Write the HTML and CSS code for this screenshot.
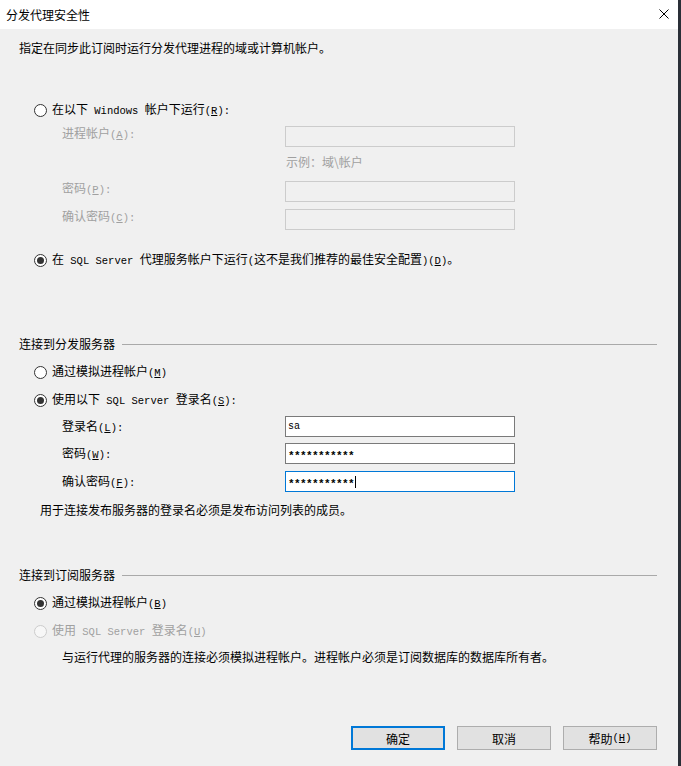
FILE: index.html
```html
<!DOCTYPE html>
<html lang="zh-CN">
  <head>
    <meta charset="UTF-8" />
    <title>分发代理安全性</title>
    <link rel="stylesheet" href="styles.css">
  </head>
  <body>
    <div class="dialog">
      <!-- 标题栏 -->
      <div class="titlebar">
        <span class="title">分发代理安全性</span>
        <svg class="close" viewBox="0 0 10 10">
          <path d="M0.5 0.5 L9.5 9.5 M9.5 0.5 L0.5 9.5" stroke="#000" stroke-width="1" fill="none" />
        </svg>
      </div>

      <div class="body">
        <p class="intro">指定在同步此订阅时运行分发代理进程的域或计算机帐户。</p>

        <!-- Windows 帐户 -->
        <div class="radio gap-win">
          <span class="dot"></span>
          <span>在以下<span class="en"> Windows </span>帐户下运行<span class="en">(<u>R</u>):</span></span>
        </div>
        <div class="field off gap-a">
          <span class="flabel">进程帐户<span class="en">(<u>A</u>):</span></span>
          <span class="box"></span>
        </div>
        <div class="hint">示例：域\帐户</div>
        <div class="field off gap-b">
          <span class="flabel">密码<span class="en">(<u>P</u>):</span></span>
          <span class="box"></span>
        </div>
        <div class="field off gap-c">
          <span class="flabel">确认密码<span class="en">(<u>C</u>):</span></span>
          <span class="box"></span>
        </div>
        <div class="radio gap-d">
          <span class="dot on"></span>
          <span>在<span class="en"> SQL Server </span>代理服务帐户下运行<span class="en">(</span>这不是我们推荐的最佳安全配置<span class="en">)(<u>D</u>)</span>。</span>
        </div>

        <!-- 连接到分发服务器 -->
        <div class="group gap-g1"><span>连接到分发服务器</span><i class="rule"></i></div>
        <div class="radio gap-r">
          <span class="dot"></span>
          <span>通过模拟进程帐户<span class="en">(<u>M</u>)</span></span>
        </div>
        <div class="radio gap-r">
          <span class="dot on"></span>
          <span>使用以下<span class="en"> SQL Server </span>登录名<span class="en">(<u>S</u>):</span></span>
        </div>
        <div class="field on gap-l">
          <span class="flabel">登录名<span class="en">(<u>L</u>):</span></span>
          <span class="box"><span class="val">sa</span></span>
        </div>
        <div class="field on gap-b2">
          <span class="flabel">密码<span class="en">(<u>W</u>):</span></span>
          <span class="box"><span class="val stars">***********</span></span>
        </div>
        <div class="field on gap-c2">
          <span class="flabel">确认密码<span class="en">(<u>F</u>):</span></span>
          <span class="box focus"><span class="val stars">***********</span><i class="caret"></i></span>
        </div>
        <p class="note note-pub">用于连接发布服务器的登录名必须是发布访问列表的成员。</p>

        <!-- 连接到订阅服务器 -->
        <div class="group gap-g2"><span>连接到订阅服务器</span><i class="rule"></i></div>
        <div class="radio gap-r">
          <span class="dot on"></span>
          <span>通过模拟进程帐户<span class="en">(<u>B</u>)</span></span>
        </div>
        <div class="radio gap-r off">
          <span class="dot"></span>
          <span>使用<span class="en"> SQL Server </span>登录名<span class="en">(<u>U</u>)</span></span>
        </div>
        <p class="note note-sub">与运行代理的服务器的连接必须模拟进程帐户。进程帐户必须是订阅数据库的数据库所有者。</p>

        <!-- 按钮 -->
        <div class="buttons">
          <button class="btn default">确定</button>
          <button class="btn">取消</button>
          <button class="btn">帮助<span class="en">(<u>H</u>)</span></button>
        </div>
      </div>
    </div>
  </body>
</html>
```

FILE: styles.css
```css
/* 样式初始化 */
* {
  margin: 0;
  padding: 0;
  box-sizing: border-box;
}
body {
  font-family: "Noto Sans CJK SC", "Noto Sans", sans-serif;
  font-size: 12px;
  color: #000;
  background: #f0f0f0;
}
/* 对话框 */
.dialog {
  width: 681px;
  height: 766px;
  background: #f0f0f0;
  border-right: 3px solid #2a2f37;
}
.titlebar {
  height: 29px;
  background: #fff;
  display: flex;
  align-items: center;
  justify-content: space-between;
  padding: 0 9px 0 6px;
  line-height: 16px;
}
.close {
  width: 10px;
  height: 10px;
  margin-top: -2px;
}
.body {
  padding: 11px 21px 0 19px;
}
.intro,
.note,
.hint {
  line-height: 16px;
}
/* 西文部分，等宽半角 */
.en {
  font-family: "Liberation Mono", monospace;
  font-size: 10.5px;
  white-space: pre;
}
u {
  text-decoration: underline;
  text-underline-offset: 1px;
}
/* 单选框 */
.radio {
  display: flex;
  align-items: center;
  gap: 5px;
  height: 16px;
  line-height: 16px;
  margin-left: 15px;
}
.dot {
  width: 13px;
  height: 13px;
  border: 1px solid #333;
  border-radius: 50%;
  background: #fff;
  display: flex;
  align-items: center;
  justify-content: center;
}
.dot.on::after {
  content: "";
  width: 7px;
  height: 7px;
  border-radius: 50%;
  background: #333;
}
.radio.off {
  color: #a0a0a0;
}
.radio.off .dot {
  border-color: #cccccc;
  background: #f7f7f7;
}
/* 输入行 */
.field {
  display: grid;
  grid-template-columns: 223px 230px;
  margin-left: 43px;
  line-height: 16px;
}
.box {
  height: 21px;
  border: 1px solid #7a7a7a;
  background: #fff;
  display: flex;
  align-items: center;
  padding-left: 2px;
}
.field.off {
  color: #a0a0a0;
}
.field.off .box {
  margin-top: 1px;
  border-color: #cccccc;
  background: #f0f0f0;
}
.field.on {
  align-items: center;
}
.box.focus {
  border-color: #0078d7;
}
.val {
  font-family: "Liberation Mono", monospace;
  font-size: 10px;
}
.stars {
  font-weight: bold;
  font-size: 11px;
  letter-spacing: -0.6px;
  padding-top: 4px;
}
.caret {
  width: 1px;
  height: 12px;
  background: #000;
  margin-left: 1px;
}
.hint {
  color: #a0a0a0;
  margin: 7px 0 0 267px;
}
/* 分组标题 */
.group {
  display: flex;
  align-items: center;
  line-height: 16px;
}
.rule {
  flex: 1;
  height: 1px;
  background: #a9a9a9;
  margin-left: 7px;
}
.note-pub {
  margin: 10px 0 0 21px;
}
.note-sub {
  margin: 10px 0 0 43px;
}
/* 间距 */
.gap-win { margin-top: 46px; }
.gap-a { margin-top: 7px; }
.gap-b { margin-top: 10px; }
.gap-c { margin-top: 6px; }
.gap-d { margin-top: 22px; }
.gap-g1 { margin-top: 68px; }
.gap-g2 { margin-top: 49px; }
.gap-r { margin-top: 12px; }
.gap-l { margin-top: 8px; }
.gap-b2 { margin-top: 6px; }
.gap-c2 { margin-top: 7px; }
/* 按钮 */
.buttons {
  display: flex;
  justify-content: flex-end;
  gap: 12px;
  margin-top: 61px;
}
.btn {
  width: 94px;
  height: 24px;
  font-family: inherit;
  font-size: 12px;
  color: #000;
  background: #e1e1e1;
  border: 1px solid #adadad;
  display: flex;
  align-items: center;
  justify-content: center;
}
.btn.default {
  border: 2px solid #0078d7;
}
```
